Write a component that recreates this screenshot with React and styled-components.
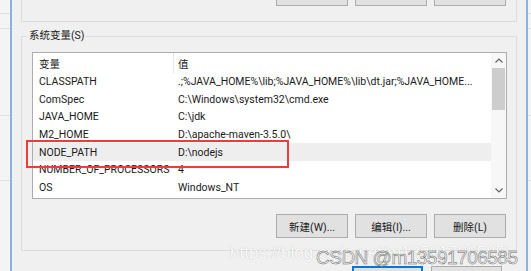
import React from 'react'
import styled, { createGlobalStyle } from "styled-components"

const GlobalStyle = createGlobalStyle`
  html, body {
    margin: 0;
    padding: 0;
    background: #f0f0f0;
  }
  body {
    font-family: Roboto, "Noto Sans CJK SC", sans-serif;
    color: #1a1a1a;
  }
`;

const Screen = styled.div`
  position: relative;
  width: 531px;
  height: 271px;
  overflow: hidden;
  display: flex;
  background: #f0f0f0;
`;

const SideStrip = styled.div`
  width: ${p => p.$w}px;
  flex: none;
  background:
    linear-gradient(#e0e0e0, #e0e0e0) 0 13px / 100% 1px no-repeat,
    linear-gradient(#e0e0e0, #e0e0e0) 0 28px / 100% 1px no-repeat,
    linear-gradient(#e0e0e0, #e0e0e0) 0 115px / 100% 1px no-repeat,
    linear-gradient(#e0e0e0, #e0e0e0) 0 180px / 100% 1px no-repeat,
    #f4f4f4;
`;

const Edge = styled.div`
  width: 2px;
  flex: none;
  background: #8cb2dd;
`;

const Dialog = styled.div`
  flex: 1;
  display: flex;
  flex-direction: column;
  padding: 0 9px;
  background: #f0f0f0;
`;

const TopGroup = styled.div`
  height: 22px;
  box-sizing: border-box;
  flex: none;
  border: 1px solid #dcdcdc;
  border-top: none;
  display: flex;
  justify-content: flex-end;
  align-items: flex-end;
  gap: 7px;
  padding: 0 10px 15px 0;
`;

const Button = styled.button`
  width: ${p => p.$w || 72}px;
  height: 24px;
  flex: none;
  box-sizing: border-box;
  margin: 0;
  padding: 0;
  background: #e1e1e1;
  border: 1px solid ${p => (p.$primary ? "#0078d7" : "#adadad")};
  box-shadow: ${p => (p.$primary ? "inset 0 0 0 1px #0078d7" : "none")};
  font-family: Roboto, "Noto Sans CJK SC", sans-serif;
  font-size: 10.5px;
  color: #1a1a1a;
`;

const Group = styled.fieldset`
  margin: 6px 0 0;
  padding: 0 9px 12px 10px;
  border: 1px solid #dcdcdc;
  min-width: 0;
`;

const Legend = styled.legend`
  margin-left: -5px;
  padding: 0 2px;
  font-size: 10.5px;
  line-height: 16px;
`;

const ListBox = styled.div`
  position: relative;
  margin-top: 8px;
  height: 147px;
  box-sizing: border-box;
  border: 1px solid #abadb3;
  background: #fff;
  display: flex;
`;

const Table = styled.div`
  flex: 1;
  display: flex;
  flex-direction: column;
`;

const Row = styled.div`
  display: grid;
  grid-template-columns: 141px 1fr;
  height: ${p => (p.$head ? 20 : 17.6)}px;
  align-items: center;
  font-size: 10.5px;
  white-space: nowrap;
  background: ${p => (p.$selected ? "#eeeeee" : "transparent")};
`;

const NameCell = styled.div`
  padding-left: 6px;
  height: 100%;
  display: flex;
  align-items: center;
  border-right: ${p => (p.$head ? "1px solid #e5e5e5" : "1px solid transparent")};
`;

const ValueCell = styled.div`
  padding-left: 4px;
  overflow: hidden;
`;

const ScrollBar = styled.div`
  width: 15px;
  flex: none;
  display: flex;
  flex-direction: column;
  align-items: center;
  background: #f7f7f7;
`;

const Arrow = styled.div`
  height: 15px;
  flex: none;
  display: flex;
  align-items: center;
  justify-content: center;
`;

const Track = styled.div`
  flex: 1;
  width: 100%;
  padding: 0 1px;
  box-sizing: border-box;
`;

const Thumb = styled.div`
  height: 42px;
  width: 100%;
  background: #cdcdcd;
`;

const Highlight = styled.div`
  position: absolute;
  left: -7px;
  top: 87px;
  width: 263px;
  height: 28px;
  box-sizing: border-box;
  border: 2px solid #ee3b3b;
  pointer-events: none;
`;

const ButtonRow = styled.div`
  display: flex;
  justify-content: flex-end;
  gap: 7px;
  margin-top: 15px;
  padding-right: 1px;
`;

const Footer = styled.div`
  display: flex;
  justify-content: flex-end;
  gap: 8px;
  margin-top: 15px;
  padding-right: 15px;
`;

const UrlMark = styled.div`
  position: absolute;
  left: 230px;
  top: 244px;
  font-family: "Liberation Sans", sans-serif;
  font-size: 17px;
  line-height: 17px;
  color: #fbfbfb;
  text-shadow: 0 0 1px rgba(0, 0, 0, 0.25);
  white-space: nowrap;
`;

const CsdnMark = styled.div`
  position: absolute;
  left: 316px;
  top: 248px;
  font-family: "Liberation Sans", sans-serif;
  font-size: 19px;
  line-height: 19px;
  letter-spacing: -0.5px;
  color: #f6f6f6;
  -webkit-text-stroke: 0.5px #666;
  white-space: nowrap;
`;

const vars = [
  ["CLASSPATH", ".;%JAVA_HOME%\\lib;%JAVA_HOME%\\lib\\dt.jar;%JAVA_HOME..."],
  ["ComSpec", "C:\\Windows\\system32\\cmd.exe"],
  ["JAVA_HOME", "C:\\jdk"],
  ["M2_HOME", "D:\\apache-maven-3.5.0\\"],
  ["NODE_PATH", "D:\\nodejs"],
  ["NUMBER_OF_PROCESSORS", "4"],
  ["OS", "Windows_NT"],
];

const Chevron = ({ up }) => (
  <svg width="8" height="5" viewBox="0 0 8 5">
    <path
      d={up ? "M0.5 4.5 L4 1 L7.5 4.5" : "M0.5 0.5 L4 4 L7.5 0.5"}
      fill="none"
      stroke="#606060"
      strokeWidth="1.1"
    />
  </svg>
);

const App = () => {
  return (
    <Screen>
      <GlobalStyle />
      <SideStrip $w={10} />
      <Edge />
      <Dialog>
        <TopGroup>
          <Button />
          <Button />
          <Button />
        </TopGroup>
        <Group>
          <Legend>系统变量(S)</Legend>
          <ListBox>
            <Table>
              <Row $head>
                <NameCell $head>变量</NameCell>
                <ValueCell>值</ValueCell>
              </Row>
              {vars.map(([name, value]) => (
                <Row key={name} $selected={name === "NODE_PATH"}>
                  <NameCell>{name}</NameCell>
                  <ValueCell>{value}</ValueCell>
                </Row>
              ))}
            </Table>
            <ScrollBar>
              <Arrow><Chevron up /></Arrow>
              <Track><Thumb /></Track>
              <Arrow><Chevron /></Arrow>
            </ScrollBar>
            <Highlight />
          </ListBox>
          <ButtonRow>
            <Button>新建(W)...</Button>
            <Button>编辑(I)...</Button>
            <Button>删除(L)</Button>
          </ButtonRow>
        </Group>
        <Footer>
          <Button $w={71} $primary />
          <Button $w={71} />
        </Footer>
      </Dialog>
      <Edge />
      <SideStrip $w={3} />
      <UrlMark>https://blog.csdn.net/m13591706585i</UrlMark>
      <CsdnMark>CSDN @m13591706585</CsdnMark>
    </Screen>
  );
};

export default App
